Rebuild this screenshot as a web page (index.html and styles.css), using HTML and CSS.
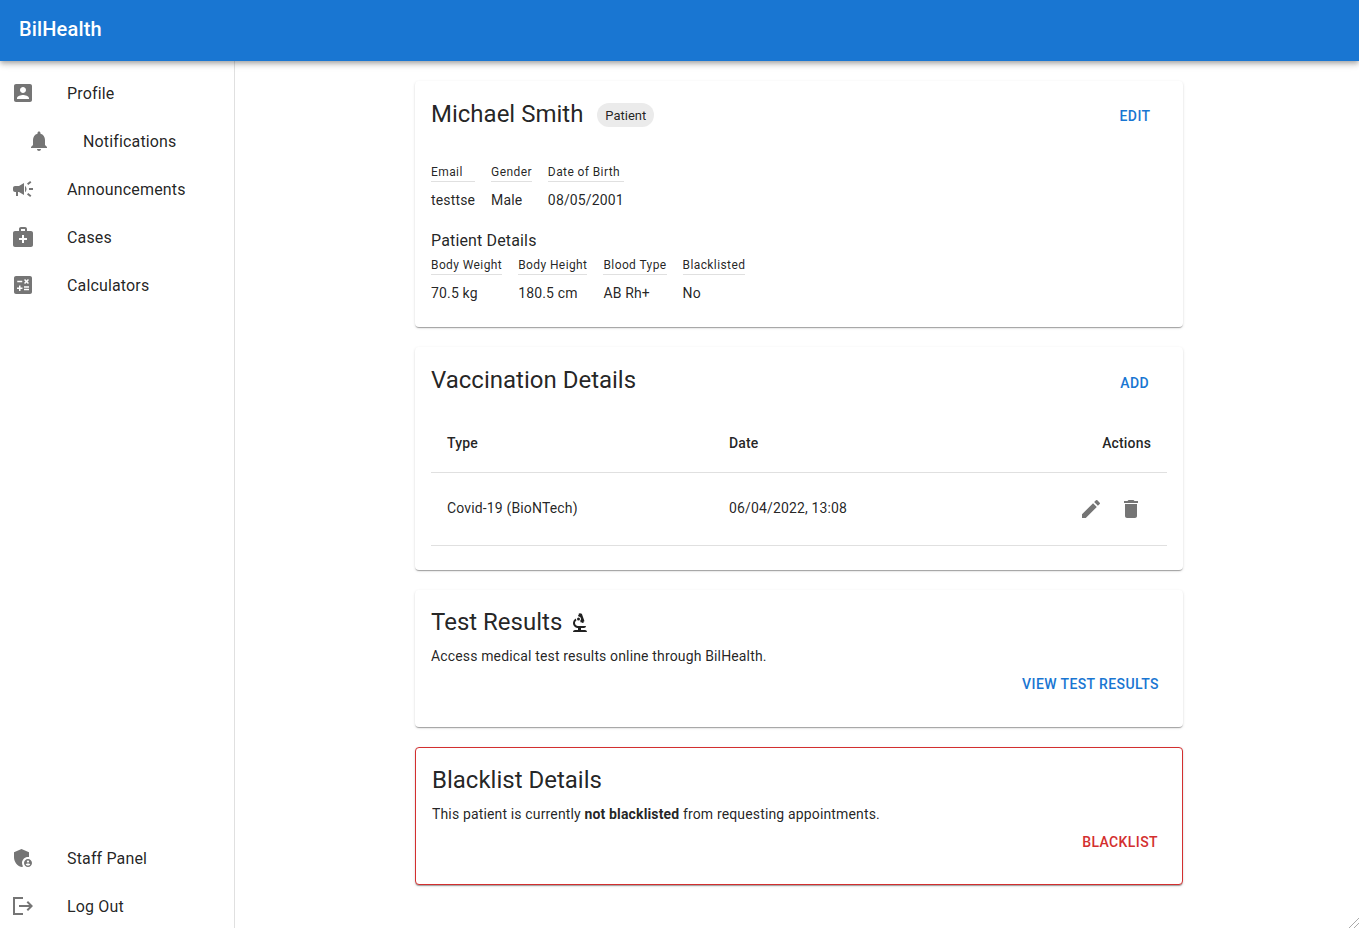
FILE: index.html
```html
<!DOCTYPE html>
<html lang="en">
<head>
<meta charset="utf-8">
<title>BilHealth</title>
<link rel="stylesheet" href="styles.css">
</head>
<body>
<header class="appbar"><span class="brand">BilHealth</span></header>
<div class="shell">
  <nav class="sidebar">
    <ul class="nav-list">
      <li class="nav-item"><span class="nav-icon"><svg viewBox="0 0 24 24"><path d="M3 5v14c0 1.1.89 2 2 2h14c1.1 0 2-.9 2-2V5c0-1.1-.9-2-2-2H5c-1.11 0-2 .9-2 2zm12 4c0 1.66-1.34 3-3 3s-3-1.34-3-3 1.34-3 3-3 3 1.34 3 3zm-9 8c0-2 4-3.1 6-3.1s6 1.1 6 3.1v1H6v-1z"/></svg></span>Profile</li>
      <li class="nav-item nested"><span class="nav-icon"><svg viewBox="0 0 24 24"><path d="M12 22c1.1 0 2-.9 2-2h-4c0 1.1.89 2 2 2zm6-6v-5c0-3.07-1.64-5.64-4.5-6.32V4c0-.83-.67-1.5-1.5-1.5s-1.5.67-1.5 1.5v.68C7.63 5.36 6 7.92 6 11v5l-2 2v1h16v-1l-2-2z"/></svg></span>Notifications</li>
      <li class="nav-item"><span class="nav-icon"><svg viewBox="0 0 24 24"><path d="M18 11v2h4v-2h-4zm-2 6.61c.96.71 2.21 1.65 3.2 2.39.4-.53.8-1.07 1.2-1.6-.99-.74-2.24-1.68-3.2-2.4-.4.54-.8 1.08-1.2 1.61zM20.4 5.6c-.4-.53-.8-1.07-1.2-1.6-.99.74-2.24 1.68-3.2 2.4.4.53.8 1.07 1.2 1.6.96-.72 2.21-1.65 3.2-2.4zM4 9c-1.1 0-2 .9-2 2v2c0 1.1.9 2 2 2h1v4h2v-4h1l5 3V6L8 9H4zm11.5 3c0-1.33-.58-2.53-1.5-3.35v6.69c.92-.81 1.5-2.01 1.5-3.34z"/></svg></span>Announcements</li>
      <li class="nav-item"><span class="nav-icon"><svg viewBox="0 0 24 24"><path d="M20 6h-4V4c0-1.1-.9-2-2-2h-4c-1.1 0-2 .9-2 2v2H4c-1.1 0-2 .9-2 2v12c0 1.1.9 2 2 2h16c1.1 0 2-.9 2-2V8c0-1.1-.9-2-2-2zM10 4h4v2h-4V4zm6 11h-3v3h-2v-3H8v-2h3v-3h2v3h3v2z"/></svg></span>Cases</li>
      <li class="nav-item"><span class="nav-icon"><svg viewBox="0 0 24 24"><path d="M19 3H5c-1.1 0-2 .9-2 2v14c0 1.1.9 2 2 2h14c1.1 0 2-.9 2-2V5c0-1.1-.9-2-2-2zm-5.97 4.06L14.09 6l1.41 1.41L16.91 6l1.06 1.06-1.41 1.41 1.41 1.41-1.06 1.06-1.41-1.4-1.41 1.41-1.06-1.06 1.41-1.41-1.41-1.42zm-6.78.66h5v1.5h-5v-1.5zM11.5 16h-2v2H8v-2H6v-1.5h2v-2h1.5v2h2V16zm6.5 1.25h-5v-1.5h5v1.5zm0-2.5h-5v-1.5h5v1.5z"/></svg></span>Calculators</li>
    </ul>
    <ul class="nav-list bottom-list">
      <li class="nav-item"><span class="nav-icon"><svg viewBox="0 0 24 24"><path d="M17 11c.34 0 .67.04 1 .09V6.27L10.5 3 3 6.27v4.91c0 4.54 3.2 8.79 7.5 9.82.55-.13 1.08-.32 1.6-.55-.69-.98-1.1-2.17-1.1-3.45 0-3.31 2.69-6 6-6z"/><path d="M17 13c-2.21 0-4 1.79-4 4s1.79 4 4 4 4-1.79 4-4-1.79-4-4-4zm0 1.38c.62 0 1.12.51 1.12 1.12s-.51 1.12-1.12 1.12-1.12-.51-1.12-1.12.5-1.12 1.12-1.12zm0 5.37c-.93 0-1.74-.46-2.24-1.17.05-.72 1.51-1.08 2.24-1.08s2.19.36 2.24 1.08c-.5.71-1.31 1.17-2.24 1.17z"/></svg></span>Staff Panel</li>
      <li class="nav-item"><span class="nav-icon"><svg viewBox="0 0 24 24"><path d="M17 7l-1.4 1.4L18.2 11H8v2h10.2l-2.6 2.6L17 17l5-5zM2 3h10v2H4v14h8v2H2z"/></svg></span>Log Out</li>
    </ul>
  </nav>
  <main class="content">
    <section class="card info-card">
      <div class="card-head">
        <h2 class="card-title">Michael Smith</h2>
        <span class="chip">Patient</span>
        <span class="text-btn head-btn edit-btn">Edit</span>
      </div>
      <table class="facts first-facts">
        <tr><th>Email</th><th>Gender</th><th>Date of Birth</th></tr>
        <tr><td>testtse</td><td>Male</td><td>08/05/2001</td></tr>
      </table>
      <h3 class="subtitle">Patient Details</h3>
      <table class="facts">
        <tr><th>Body Weight</th><th>Body Height</th><th>Blood Type</th><th>Blacklisted</th></tr>
        <tr><td>70.5 kg</td><td>180.5 cm</td><td>AB Rh+</td><td>No</td></tr>
      </table>
    </section>
    <section class="card vaccine-card">
      <div class="card-head">
        <h2 class="card-title">Vaccination Details</h2>
        <span class="text-btn head-btn add-btn">Add</span>
      </div>
      <table class="vaccines">
        <thead><tr><th class="col-type">Type</th><th class="col-date">Date</th><th class="col-actions">Actions</th></tr></thead>
        <tbody><tr>
          <td class="text-cell">Covid-19 (BioNTech)</td>
          <td class="text-cell">06/04/2022, 13:08</td>
          <td class="col-actions"><div class="row-actions">
            <svg class="row-icon" viewBox="0 0 24 24"><path d="M3 17.25V21h3.75L17.81 9.94l-3.75-3.75L3 17.25zM20.71 7.04c.39-.39.39-1.02 0-1.41l-2.34-2.34a.9959.9959 0 0 0-1.41 0l-1.83 1.83 3.75 3.75 1.83-1.83z"/></svg>
            <svg class="row-icon" viewBox="0 0 24 24"><path d="M6 19c0 1.1.9 2 2 2h8c1.1 0 2-.9 2-2V7H6v12zM19 4h-3.5l-1-1h-5l-1 1H5v2h14V4z"/></svg>
          </div></td>
        </tr></tbody>
      </table>
    </section>
    <section class="card results-card">
      <h2 class="card-title tight-title">Test Results <svg class="title-icon" viewBox="0 0 24 24"><path d="M7 19c-1.1 0-2 .9-2 2h14c0-1.1-.9-2-2-2h-4v-2h3c1.1 0 2-.9 2-2h-8c-1.66 0-3-1.34-3-3 0-1.09.59-2.04 1.46-2.56C8.17 9.03 8 8.54 8 8c0-.21.04-.42.09-.62C6.28 8.13 5 9.92 5 12c0 2.76 2.24 5 5 5v2H7z"/><path d="M10.56 5.51C11.91 5.54 13 6.64 13 8c0 .75-.33 1.41-.85 1.87l.59 1.62.94-.34.34.94 1.88-.68-.34-.94.94-.34-2.74-7.52-.94.34-.34-.94-1.88.68.34.94-.94.35.56 1.53z"/><circle cx="10.5" cy="8" r="1.5"/></svg></h2>
      <p class="body-text">Access medical test results online through BilHealth.</p>
      <div class="card-actions"><span class="text-btn">View Test Results</span></div>
    </section>
    <section class="card blacklist-card">
      <h2 class="card-title tight-title">Blacklist Details</h2>
      <p class="body-text">This patient is currently <strong>not blacklisted</strong> from requesting appointments.</p>
      <div class="card-actions"><span class="text-btn danger">Blacklist</span></div>
    </section>
  </main>
</div>
<svg class="grip" viewBox="0 0 10 10"><path d="M0 10L10 0M5 10L10 5"/></svg>
</body>
</html>
```
FILE: styles.css
```css
* { box-sizing: border-box; }
html, body { height: 100%; }
body {
  margin: 0;
  height: 928px;
  overflow: hidden;
  display: flex;
  flex-direction: column;
  background: #fff;
  color: rgba(0,0,0,.87);
  font-family: Roboto, "Liberation Sans", sans-serif;
  font-size: 14px;
  letter-spacing: .15px;
}
.appbar {
  flex: 0 0 61px;
  position: relative;
  z-index: 2;
  display: flex;
  align-items: center;
  padding: 0 19px 3px;
  background: #1976d2;
  color: #fff;
  box-shadow: 0 2px 4px -1px rgba(0,0,0,.2), 0 4px 5px rgba(0,0,0,.14), 0 1px 10px rgba(0,0,0,.12);
}
.brand { font-size: 20px; font-weight: 500; letter-spacing: .15px; }
.shell { flex: 1; display: flex; min-height: 0; }
.sidebar {
  flex: 0 0 235px;
  display: flex;
  flex-direction: column;
  justify-content: space-between;
  border-right: 1px solid #e0e0e0;
}
.nav-list { list-style: none; margin: 0; padding: 8px 0; }
.bottom-list { padding-bottom: 0; margin-bottom: -2px; }
.nav-item {
  height: 48px;
  display: flex;
  align-items: center;
  padding-left: 11px;
  font-size: 16px;
  letter-spacing: .15px;
}
.nested { padding-left: 27px; }
.nav-icon { flex: 0 0 56px; display: flex; }
.nav-icon svg { width: 24px; height: 24px; fill: #757575; }
.content {
  flex: 1;
  display: flex;
  flex-direction: column;
  align-items: center;
  gap: 20px;
  padding: 20px 0 0 4px;
}
.card {
  width: 768px;
  padding: 16px;
  background: #fff;
  border-radius: 4px;
  box-shadow: 0 2px 1px -1px rgba(0,0,0,.2), 0 1px 1px rgba(0,0,0,.14), 0 1px 3px rgba(0,0,0,.12);
}
.info-card, .vaccine-card { padding-bottom: 24px; }
.card-head { display: flex; align-items: center; height: 34px; }
.card-title { margin: 0; font-size: 24px; font-weight: 400; line-height: 34px; letter-spacing: 0; }
.tight-title { margin-top: -1px; }
.chip {
  margin: 2px 0 0 14px;
  height: 24px;
  padding: 0 8px;
  display: flex;
  align-items: center;
  border-radius: 12px;
  background: #ebebeb;
  font-size: 13px;
  letter-spacing: 0;
}
.text-btn {
  display: inline-block;
  font-size: 14px;
  font-weight: 500;
  line-height: 24px;
  letter-spacing: .4px;
  text-transform: uppercase;
  color: #1976d2;
}
.head-btn { margin-left: auto; position: relative; top: 3px; }
.edit-btn { margin-right: 16.5px; top: 2px; }
.add-btn { margin-right: 18px; }
.facts { border-collapse: separate; border-spacing: 16px 0; margin-left: -16px; }
.first-facts { margin-top: 30px; }
.facts th {
  padding: 2px 0 0;
  border-bottom: 1px solid #e0e0e0;
  font-size: 12px;
  font-weight: 400;
  line-height: 18px;
  letter-spacing: .4px;
  text-align: left;
}
.facts th, .facts td { white-space: nowrap; }
.facts td { padding: 8px 0 0; line-height: 20px; }
.subtitle { margin: 19px 0 1px; font-size: 16px; font-weight: 400; line-height: 24px; letter-spacing: .15px; }
.vaccines { width: 100%; margin-top: 17px; border-collapse: collapse; }
.vaccines th, .vaccines td { padding: 0 16px; border-bottom: 1px solid #e0e0e0; text-align: left; font-size: 14px; }
.vaccines th { height: 58px; font-weight: 500; }
.vaccines td { height: 73px; }
.vaccines .text-cell { padding-bottom: 2px; }
.col-type { width: 282px; }
.vaccines .col-actions { text-align: right; }
.row-actions { display: flex; justify-content: flex-end; gap: 16px; padding-right: 8px; }
.row-icon { width: 24px; height: 24px; fill: #757575; }
.title-icon { width: 24px; height: 24px; vertical-align: -5px; fill: rgba(0,0,0,.87); }
.body-text { margin: 7px 0 0; line-height: 20px; }
.card-actions { display: flex; justify-content: flex-end; margin-top: 2px; padding: 4px 8px 13px; }
.results-card { height: 137px; }
.blacklist-card { height: 138px; border: 1px solid #d32f2f; }
.danger { color: #d32f2f; }
.grip { position: absolute; right: 0; bottom: 0; width: 10px; height: 10px; fill: none; stroke: #aaa; stroke-width: 1; }
```
